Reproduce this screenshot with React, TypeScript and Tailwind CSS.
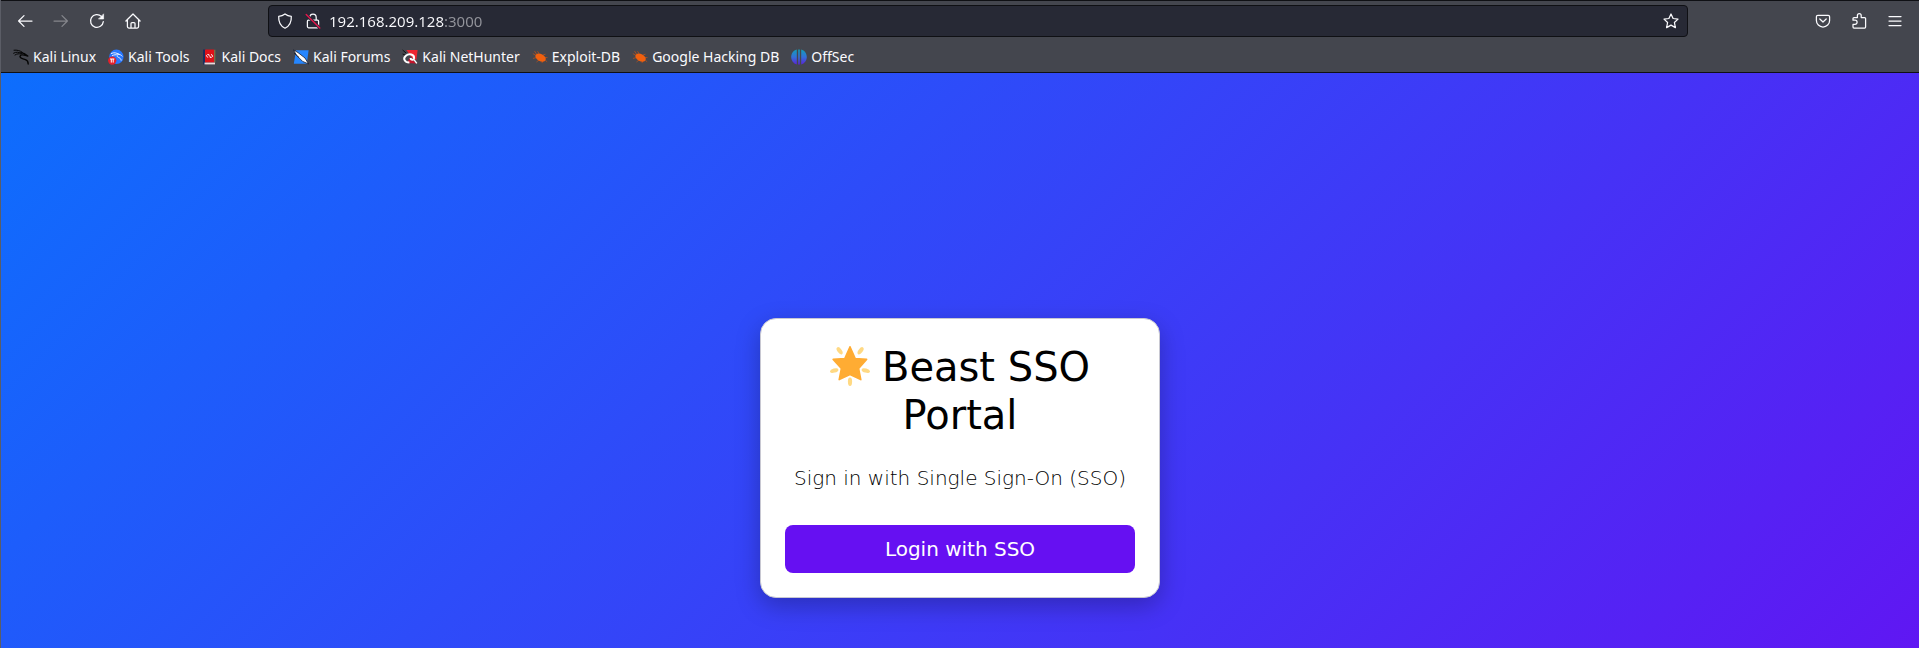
import React from "react";

type IconProps = { className?: string; children: React.ReactNode };

function Icon({ className = "", children }: IconProps) {
  return (
    <svg
      viewBox="0 0 16 16"
      className={`size-4 shrink-0 ${className}`}
      fill="none"
      stroke="currentColor"
      strokeWidth="1.25"
      strokeLinecap="round"
      strokeLinejoin="round"
      aria-hidden="true"
    >
      {children}
    </svg>
  );
}

function ToolButton({ label, disabled, children }: { label: string; disabled?: boolean; children: React.ReactNode }) {
  return (
    <button
      type="button"
      aria-label={label}
      disabled={disabled}
      className={`flex size-8 items-center justify-center rounded ${disabled ? "text-[#85868c]" : "text-[#fbfbfe]"}`}
    >
      {children}
    </button>
  );
}

const dragon = (
  <>
    <path d="M1 1.2 C4 .8 7 1.6 9.5 3.4 M.6 4.2 C3 2.6 6 3 8.5 4.4 M2 6 C4 4.6 6 4.6 8 5" strokeWidth="1" />
    <path d="M8 3.6 C11 3.8 13 5.4 14.8 7 L12.4 6.4 C10 5.4 7.2 5.8 7 7.4 C6.8 9.6 10 9.8 12.4 10.6 C14.2 11.2 15.2 12.6 15.2 15" strokeWidth="1.4" />
  </>
);

function BugIcon() {
  return (
    <svg viewBox="0 0 16 16" className="size-4 shrink-0" fill="none" aria-hidden="true">
      <path
        d="M4.5 5 L2.5 2 M7 4.5 L5.5 2.2 M4 6.5 L.8 4.5 M4.5 8.5 L1 9.5 M7 11 L4.5 13 M10.5 12 L10 14 M11 6 L13.5 5.2 M13 8.5 L15.5 8.6 M13.5 11.5 L15.2 12.8"
        stroke="#b5501c"
        strokeWidth=".8"
      />
      <ellipse cx="8.6" cy="8.6" rx="5.6" ry="3.5" transform="rotate(28 8.6 8.6)" fill="#f0600f" />
    </svg>
  );
}

const bookmarks: { name: string; icon: React.ReactNode }[] = [
  { name: "Kali Linux", icon: <Icon className="text-[#050505]">{dragon}</Icon> },
  {
    name: "Kali Tools",
    icon: (
      <svg viewBox="0 0 16 16" className="size-4 shrink-0" fill="none" aria-hidden="true">
        <circle cx="8.4" cy="7.8" r="7.2" fill="#2777ff" />
        <path d="M3 4.6 C6 3 9 4 11 5.4 M4 6.8 C6 5.6 8 5.6 9.4 6 M9 5 C12 5 13.4 6.4 14.4 7.4 M9.4 6.6 C8 8.4 13 8 13.2 11.6" stroke="#fff" strokeWidth=".9" />
        <circle cx="4.2" cy="11.6" r="4.2" fill="#e3202b" />
        <path d="M2 10 H6.4 M3.3 10 V13.6 M5.2 10 V13.6" stroke="#fff" strokeWidth="1" />
      </svg>
    ),
  },
  {
    name: "Kali Docs",
    icon: (
      <svg viewBox="0 0 16 16" className="size-4 shrink-0" fill="none" aria-hidden="true">
        <path d="M1 .5 H4 V15.5 H1 Z" fill="#1c2d5e" />
        <path d="M3 .5 H12 V13.5 H3 Z" fill="#df1119" />
        <path d="M12 .8 H13.4 V13.5 H12 Z" fill="#7b6d45" />
        <path d="M2.5 13.6 H13 V15.4 H2.5 Z" fill="#ead9dc" />
        <path d="M5.6 5.4 L4.4 6.6 L5.8 8.6 M6.6 5 C6.4 8 8.8 6 8.4 9 M9.4 5.2 L10.6 7.2 L9.4 8.6" stroke="#fff" strokeWidth="1" />
      </svg>
    ),
  },
  {
    name: "Kali Forums",
    icon: (
      <svg viewBox="0 0 16 16" className="size-4 shrink-0" fill="none" aria-hidden="true">
        <path d="M3 1.2 H15.6 L13.8 14.8 H.8 Z" fill="#2586ff" />
        <path d="M.4 .8 L5 3.6 L12 9 L15.6 15 L9.6 12.4 L3.6 6.4 Z" fill="#fff" stroke="#151b2d" strokeWidth=".8" />
        <path d="M1 4 L6 8.4" stroke="#151b2d" strokeWidth=".8" />
      </svg>
    ),
  },
  {
    name: "Kali NetHunter",
    icon: (
      <svg viewBox="0 0 16 16" className="size-4 shrink-0" fill="none" aria-hidden="true">
        <path d="M4.4 1 H15.6 L14.4 11 L10 9 Z" fill="#ee2630" />
        <path d="M5 14 L8 8.6 L14.4 14.6 Z" fill="#c4152c" />
        <path d="M.6 1 L4 4 M.6 5 L3 6" stroke="#111" strokeWidth="1" />
        <path d="M7.4 13.6 C2.4 13.4 .8 9.4 3.6 7 C7 4 12.6 5.4 12 9.4 C11.6 11.4 8.6 11.2 8.6 9" stroke="#fff" strokeWidth="2" />
        <path d="M12 10.6 L14.8 14.4" stroke="#fff" strokeWidth="1.4" />
      </svg>
    ),
  },
  { name: "Exploit-DB", icon: <BugIcon /> },
  { name: "Google Hacking DB", icon: <BugIcon /> },
  {
    name: "OffSec",
    icon: (
      <svg viewBox="0 0 16 16" className="size-4 shrink-0" aria-hidden="true">
        <defs>
          <linearGradient id="offsec" x1="0" y1="0" x2="0" y2="1">
            <stop offset="0" stopColor="#109fb8" />
            <stop offset=".5" stopColor="#3370d8" />
            <stop offset="1" stopColor="#5b22d8" />
          </linearGradient>
        </defs>
        <path
          d="M5.8 .6 V15.4 C2.4 14.6 .2 11.4 .2 8 C.2 4.6 2.4 1.4 5.8 .6 Z M7.2 .4 H8.8 V15.6 H7.2 Z M10.2 .6 C13.6 1.4 15.8 4.6 15.8 8 C15.8 11.4 13.6 14.6 10.2 15.4 Z"
          fill="url(#offsec)"
        />
      </svg>
    ),
  },
];

function BrowserBar() {
  return (
    <header className="shrink-0 border-y border-[#0f1014] bg-[#44464e] font-['Noto_Sans',sans-serif] text-[#fbfbfe]">
      <div className="flex items-center justify-between px-2 pt-1">
        <nav aria-label="Navigation" className="flex w-[259px] gap-1">
          <ToolButton label="Back">
            <Icon>
              <path d="M15 8 H1.6 M7 2.6 L1.6 8 L7 13.4" />
            </Icon>
          </ToolButton>
          <ToolButton label="Forward" disabled>
            <Icon>
              <path d="M1 8 H14.4 M9 2.6 L14.4 8 L9 13.4" />
            </Icon>
          </ToolButton>
          <ToolButton label="Reload">
            <Icon>
              <path d="M14.3 8.6 A6.4 6.4 0 1 1 12.4 3.4" />
              <path d="M14.6 1.2 V6 H9.8 Z" fill="currentColor" strokeWidth=".6" />
            </Icon>
          </ToolButton>
          <ToolButton label="Home">
            <Icon>
              <path d="M.9 8 L8 1 L15.1 8 M2.4 6.8 V13.6 Q2.4 15 3.8 15 H12.2 Q13.6 15 13.6 13.6 V6.8 M6 15 V10.6 Q6 9.6 7 9.6 H9 Q10 9.6 10 10.6 V15" />
            </Icon>
          </ToolButton>
        </nav>
        <div className="flex h-8 min-w-0 flex-1 items-center rounded border border-[#0f1014] bg-[#272935] px-2">
          <Icon>
            <path d="M8 1 C9.8 2.4 12 3.2 14.3 3.4 C14.6 9 12.4 13.2 8 15.2 C3.6 13.2 1.4 9 1.7 3.4 C4 3.2 6.2 2.4 8 1 Z" />
          </Icon>
          <Icon className="ml-3">
            <path d="M4.8 7 V4.4 A3.2 3.2 0 0 1 11.2 4.4 V7 M3.4 7.2 H12.6 Q13.6 7.2 13.6 8.2 V13.6 Q13.6 14.8 12.4 14.8 H3.6 Q2.4 14.8 2.4 13.6 V8.2 Q2.4 7.2 3.4 7.2 Z" />
            <path d="M1.2 1.6 L14.8 15" stroke="#272935" strokeWidth="3" />
            <path d="M1.2 1.6 L14.8 15" stroke="#e5164c" strokeWidth="1.4" />
          </Icon>
          <input
            type="text"
            aria-label="Address"
            defaultValue="192.168.209.128:3000"
            className="ml-2 min-w-0 flex-1 bg-[linear-gradient(to_right,#fbfbfe_115px,#94959c_115px)] bg-clip-text text-[15px] leading-6 text-transparent outline-none"
          />
          <button type="button" aria-label="Bookmark this page">
            <Icon>
              <path d="M8 1 L10.1 5.5 L15 6.1 L11.4 9.5 L12.4 14.6 L8 12.1 L3.6 14.6 L4.6 9.5 L1 6.1 L5.9 5.5 Z" />
            </Icon>
          </button>
        </div>
        <div className="ml-[119px] flex gap-1">
          <ToolButton label="Save to Pocket">
            <Icon>
              <path d="M2.8 2.4 H13.2 Q14.6 2.4 14.6 3.8 V7.4 A6.6 6.6 0 0 1 1.4 7.4 V3.8 Q1.4 2.4 2.8 2.4 Z M4.8 6 L8 9 L11.2 6" />
            </Icon>
          </ToolButton>
          <ToolButton label="Extensions">
            <Icon>
              <path d="M2 7 V5.6 Q2 4.6 3 4.6 H6.4 V2.6 A1.9 1.9 0 0 1 10.2 2.6 V4.6 H13.6 Q14.6 4.6 14.6 5.6 V14 Q14.6 15 13.6 15 H3 Q2 15 2 14 V11.4 H4 A2.1 2.1 0 0 0 4 7.2 H2" />
            </Icon>
          </ToolButton>
          <ToolButton label="Menu">
            <Icon>
              <path d="M2 3.5 H14 M2 8 H14 M2 12.5 H14" />
            </Icon>
          </ToolButton>
        </div>
      </div>
      <nav aria-label="Bookmarks" className="flex h-[35px] items-center gap-3 px-3 pt-1 text-[14px] leading-5">
        {bookmarks.map((b) => (
          <a key={b.name} href="#" className="flex items-center gap-1 whitespace-nowrap">
            {b.icon}
            {b.name}
          </a>
        ))}
      </nav>
    </header>
  );
}

function GlowingStar() {
  return (
    <svg viewBox="0 0 40 40" className="mr-3 inline size-10 align-[-5px]" role="img" aria-label="Glowing star">
      <g fill="#ffd983">
        <ellipse cx="20" cy="35.8" rx="2.1" ry="4.2" />
        <ellipse cx="9.6" cy="4.8" rx="2.1" ry="4.2" transform="rotate(-36 9.6 4.8)" />
        <ellipse cx="30.6" cy="4.8" rx="2.1" ry="4.2" transform="rotate(36 30.6 4.8)" />
        <ellipse cx="4.2" cy="24.6" rx="2.1" ry="4.3" transform="rotate(74 4.2 24.6)" />
        <ellipse cx="35.8" cy="24.6" rx="2.1" ry="4.3" transform="rotate(-74 35.8 24.6)" />
      </g>
      <path
        d="M20 .8 L25.2 12.6 L36.6 13.4 L28.6 22.4 L30.8 33.6 L20 28.6 L9.2 33.6 L11.4 22.4 L3.2 13.4 L14.8 12.6 Z"
        fill="#ffac33"
        stroke="#ffac33"
        strokeWidth="1.6"
        strokeLinejoin="round"
      />
    </svg>
  );
}

export default function App() {
  return (
    <div className="flex h-screen flex-col overflow-hidden border-l border-[#5b5d66]">
      <BrowserBar />
      <main className="min-h-0 flex-1 overflow-hidden font-['DejaVu_Sans',sans-serif]">
        <div className="flex min-h-[769px] items-center justify-center bg-[linear-gradient(135deg,#0d6efd,#6610f2)]">
          <section className="w-full max-w-[400px] rounded-2xl border border-[#c8c8d2] bg-white p-6 text-center text-black shadow-[0_8px_24px_rgba(0,0,0,0.25)]">
            <h1 className="mb-6 text-[40px] leading-[48px]">
              <GlowingStar />
              Beast SSO Portal
            </h1>
            <p className="mb-8 text-xl leading-[30px] font-light">Sign in with Single Sign-On (SSO)</p>
            <button type="button" className="h-12 w-full rounded-lg bg-[#6610f2] text-xl leading-[30px] text-white">
              Login with SSO
            </button>
          </section>
        </div>
      </main>
    </div>
  );
}
